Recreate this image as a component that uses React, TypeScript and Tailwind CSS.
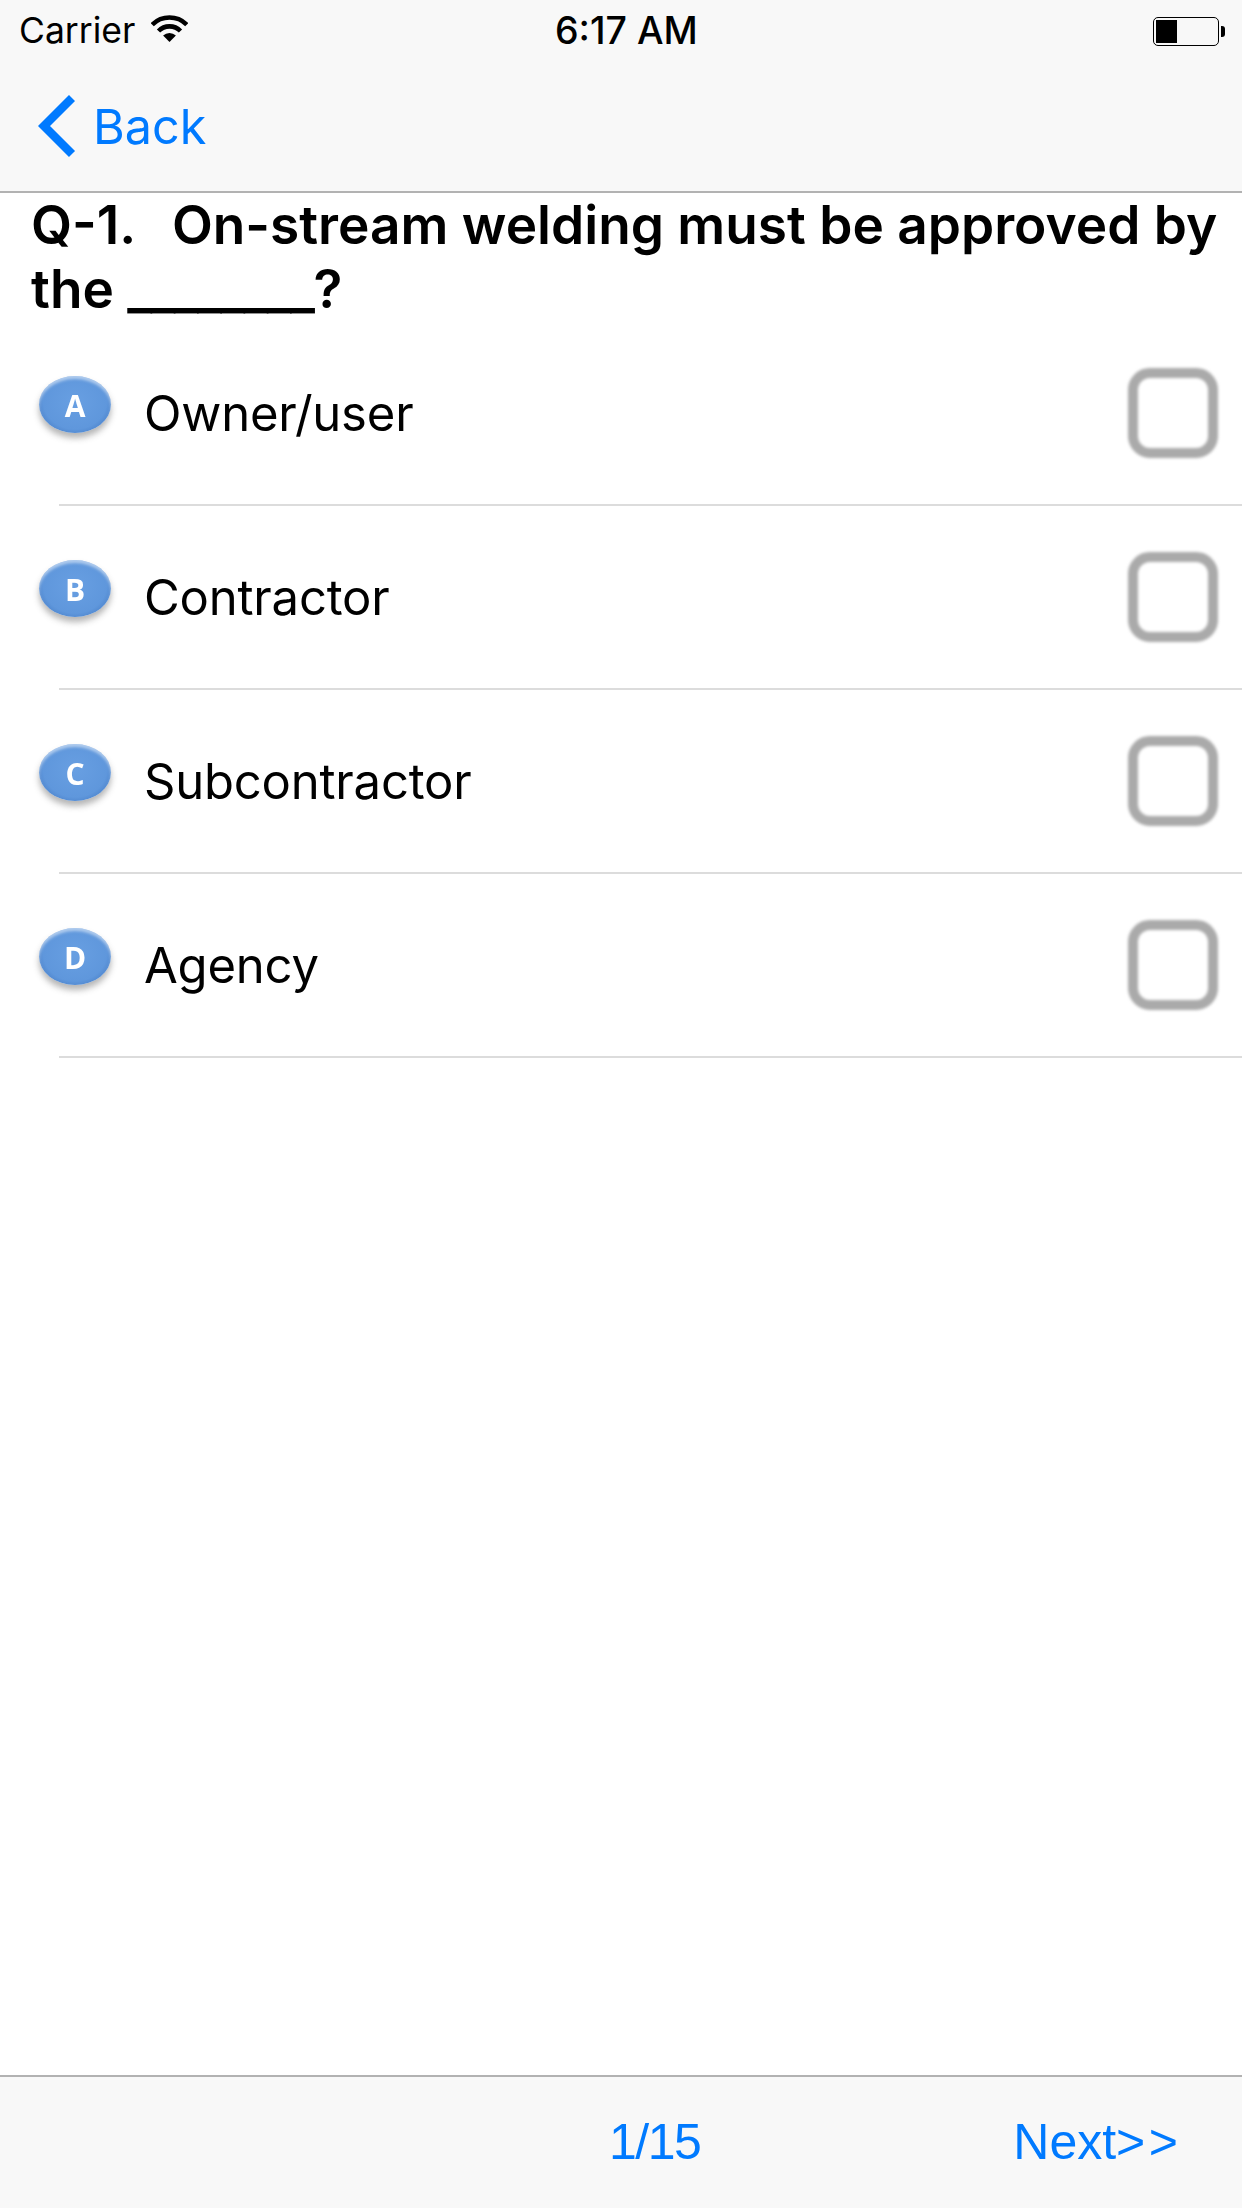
const options = [
  { letter: "A", label: "Owner/user" },
  { letter: "B", label: "Contractor" },
  { letter: "C", label: "Subcontractor" },
  { letter: "D", label: "Agency" },
];

function WifiIcon() {
  return (
    <svg width="37" height="28" viewBox="0 0 37 28" className="ml-[16px] mb-[5px]">
      <path d="M18.5 27 L12.1 20.6 A9 9 0 0 1 24.9 20.6 Z" fill="#000" />
      <path d="M7.5 16 A15.5 15.5 0 0 1 29.5 16" fill="none" stroke="#000" strokeWidth="4.6" />
      <path d="M1.2 9.7 A24.5 24.5 0 0 1 35.8 9.7" fill="none" stroke="#000" strokeWidth="4.6" />
    </svg>
  );
}

function Battery() {
  return (
    <div className="flex items-center">
      <div className="w-[66px] h-[29px] rounded-[5px] border-[1.5px] border-black p-[2px]">
        <div className="w-[21px] h-full bg-black" />
      </div>
      <div className="w-[4px] h-[11px] ml-[2px] bg-black rounded-r-[3px]" />
    </div>
  );
}

function OptionRow({ letter, label }: { letter: string; label: string }) {
  return (
    <div>
      <div className="h-[182px] flex items-center pl-[39px] pr-[24px]">
        <div className="w-[72px] h-[57px] mb-[17px] shrink-0 rounded-[50%] flex items-center justify-center bg-[radial-gradient(ellipse_at_50%_45%,#689fe2_0%,#5f97dc_62%,#3268b4_100%)] shadow-[0_5px_6px_rgba(70,70,70,0.4),inset_0_3px_3px_rgba(255,255,255,0.5)]">
          <span className="text-white text-[30px] font-bold mt-[2px] blur-[0.4px] [font-family:'Open_Sans',sans-serif]">{letter}</span>
        </div>
        <span className="ml-[33px] pt-[1px] flex-1 text-[49px] tracking-[-0.2px] text-black [font-family:Inter,sans-serif]">{label}</span>
        <div className="w-[90px] h-[90px] rounded-[22px] border-[10px] border-[#aaaaaa] bg-white blur-[1.5px]" />
      </div>
      <div className="ml-[59px] h-[2px] bg-[#dcdcdc]" />
    </div>
  );
}

export default function App() {
  return (
    <div className="w-[1242px] h-[2208px] flex flex-col bg-white text-black [font-family:Inter,sans-serif]">
      {/* Status + nav bar */}
      <div className="h-[193px] bg-[#f8f8f8] border-b-2 border-[#b2b2b2] shrink-0">
        <div className="h-[60px] relative flex items-center justify-between pl-[19px] pr-[17px] pt-[2px]">
          <div className="flex items-center">
            <span className="text-[35.5px]">Carrier</span>
            <WifiIcon />
          </div>
          <span className="absolute left-[555px] text-[37.5px] font-medium">6:17 AM</span>
          <Battery />
        </div>
        <div className="h-[131px] flex items-center pl-[38px]">
          <svg width="38" height="62" viewBox="0 0 38 62">
            <path d="M34 3 L6 31 L34 59" fill="none" stroke="#007aff" strokeWidth="8.5" />
          </svg>
          <span className="ml-[17px] mt-[3px] text-[48.5px] text-[#007aff]">Back</span>
        </div>
      </div>

      {/* Question */}
      <div className="pl-[31px] pr-[16px] h-[129px] text-[53.2px] leading-[64px] font-semibold">
        Q-1.{"\u00a0\u00a0\u2009"}On-stream welding must be approved by the <span className="tracking-[-1.7px]">________</span>?
      </div>

      {/* Options */}
      <div className="flex-1">
        {options.map((o) => (
          <OptionRow key={o.letter} letter={o.letter} label={o.label} />
        ))}
      </div>

      {/* Bottom bar */}
      <div className="h-[133px] shrink-0 bg-[#f8f8f8] border-t-2 border-[#b2b2b2] relative flex items-center justify-end pr-[64px] text-[#007aff] text-[50px] [font-family:'Liberation_Sans',sans-serif]">
        <span className="absolute left-[609px] tracking-[-1.5px]">1/15</span>
        <span>Next<span className="mr-[3.5px]">&gt;</span>&gt;</span>
      </div>
    </div>
  );
}
